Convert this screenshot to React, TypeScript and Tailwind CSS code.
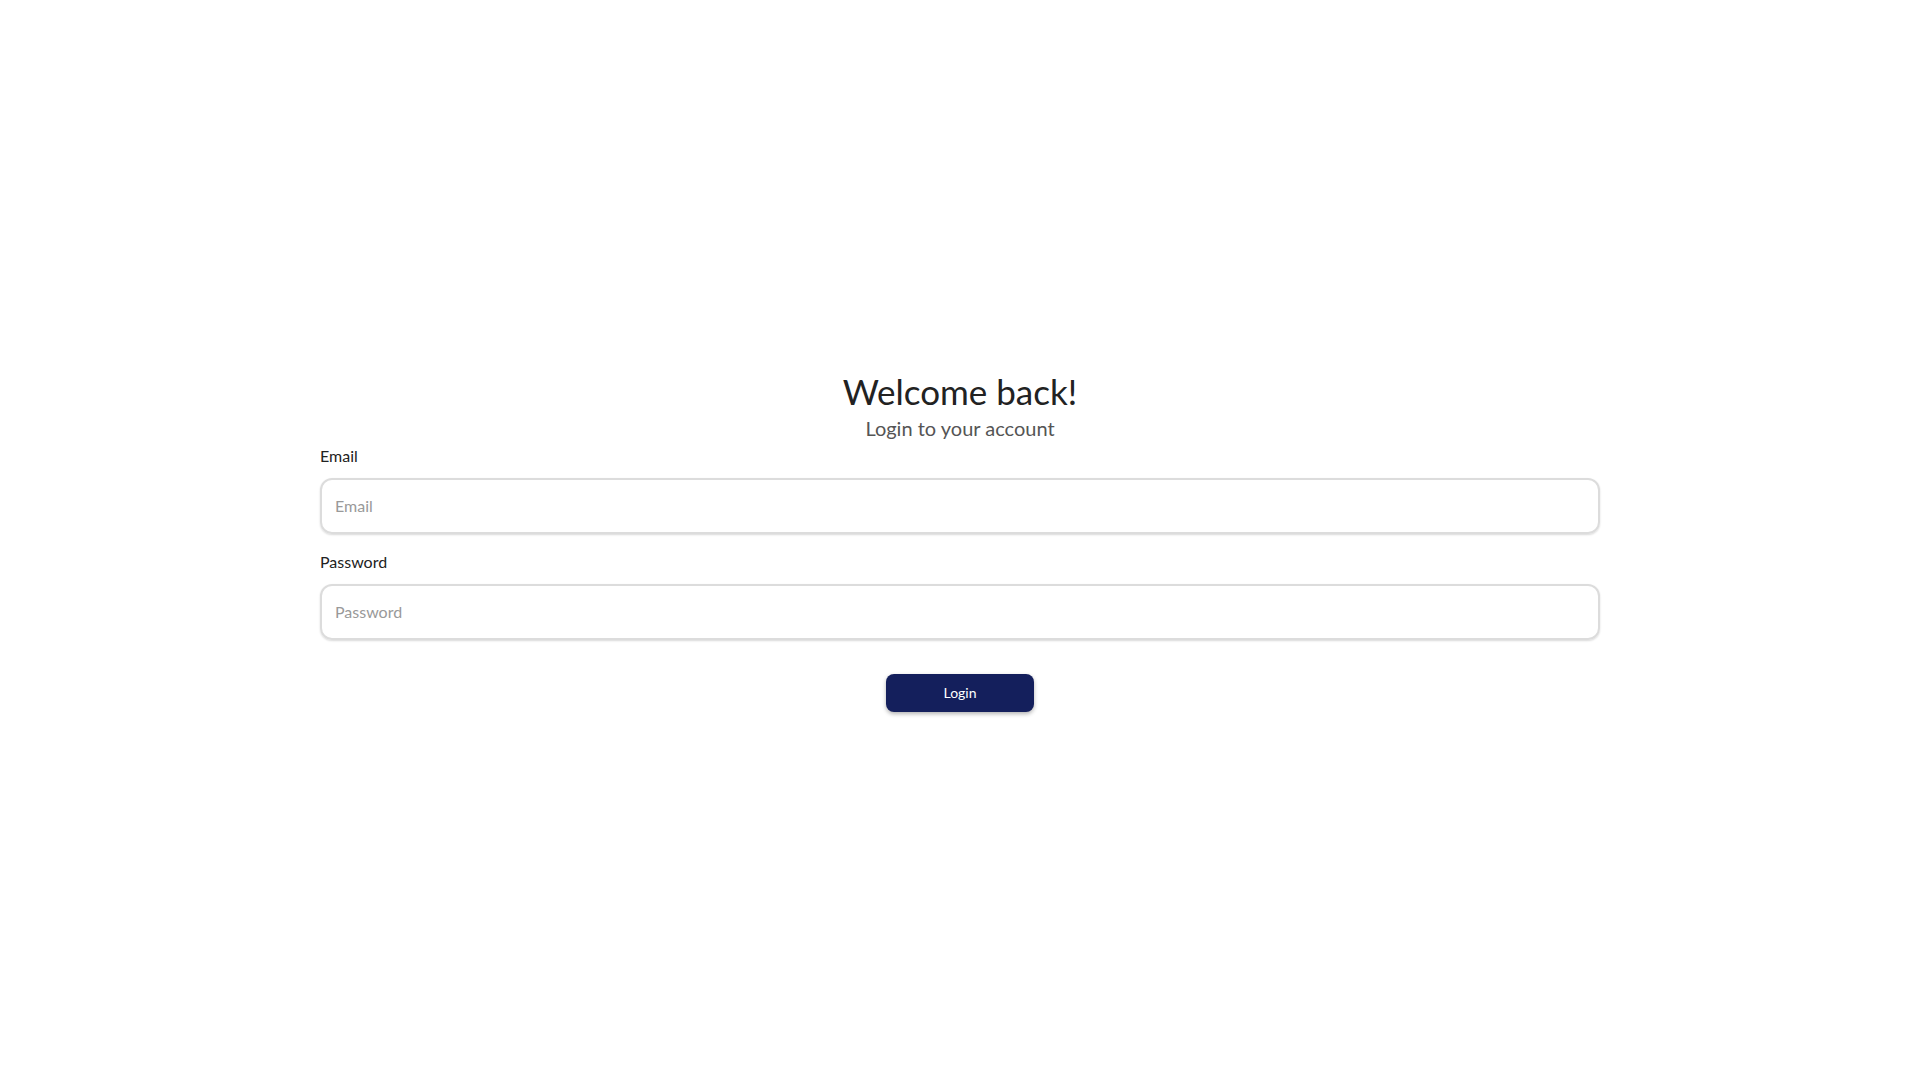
export default function App() {
  return (
    <div className="min-h-screen bg-white flex items-center justify-center font-['Lato',sans-serif]">
      <div className="w-[1280px] flex flex-col">
        <div className="flex flex-col items-center">
          <h1 className="text-[35px] leading-[44px] text-[#222]">Welcome back!</h1>
          <p className="text-[20px] leading-[30px] text-[#555]">Login to your account</p>
        </div>
        <form className="flex flex-col mt-[1px]" onSubmit={(e) => e.preventDefault()}>
          <label className="text-[16px] leading-[24px] text-[#222]">Email</label>
          <input
            type="email"
            placeholder="Email"
            className="mt-[10px] h-[56px] rounded-[12px] border-2 border-[#dcdcdc] px-[13px] text-[16px] text-[#222] placeholder:text-[#999] outline-none shadow-[0_1px_2px_rgba(0,0,0,0.15)]"
          />
          <label className="mt-[16px] text-[16px] leading-[24px] text-[#222]">Password</label>
          <input
            type="password"
            placeholder="Password"
            className="mt-[10px] h-[56px] rounded-[12px] border-2 border-[#dcdcdc] px-[13px] text-[16px] text-[#222] placeholder:text-[#999] outline-none shadow-[0_1px_2px_rgba(0,0,0,0.15)]"
          />
          <div className="flex justify-center mt-[34px]">
            <button
              type="submit"
              className="w-[148px] h-[38px] rounded-[8px] bg-[#141f5c] text-white text-[14px] shadow-[0_2px_4px_rgba(0,0,0,0.3)]"
            >
              Login
            </button>
          </div>
        </form>
      </div>
    </div>
  );
}
